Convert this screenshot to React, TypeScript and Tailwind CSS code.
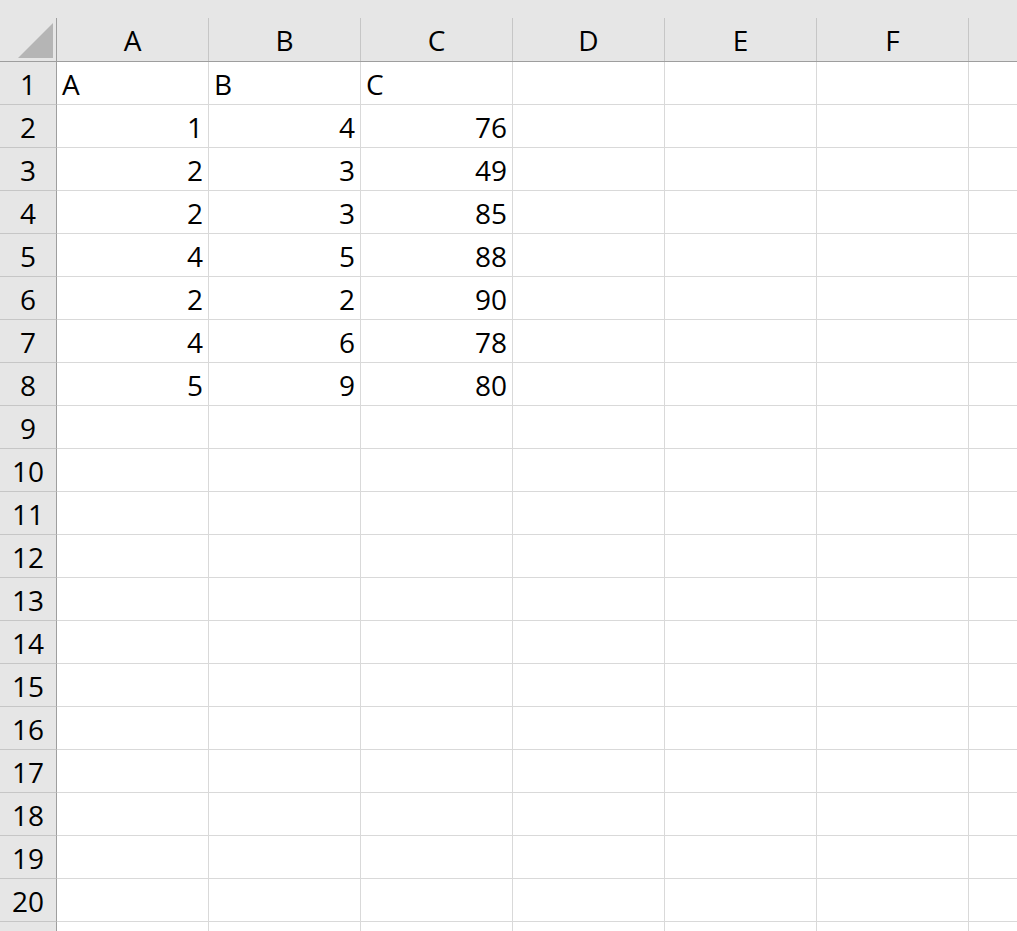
import React from "react";

const cols = ["A", "B", "C", "D", "E", "F", ""];
const data: (string | number)[][] = [
  ["A", "B", "C"],
  [1, 4, 76],
  [2, 3, 49],
  [2, 3, 85],
  [4, 5, 88],
  [2, 2, 90],
  [4, 6, 78],
  [5, 9, 80],
];

export default function App() {
  const rows = Array.from({ length: 21 }, (_, i) => i + 1);
  return (
    <div
      className="w-[1017px] h-[931px] overflow-hidden bg-white text-black"
      style={{ fontFamily: '"Open Sans", "Noto Sans", sans-serif' }}
    >
      {/* header row */}
      <div className="flex h-[62px] bg-[#e6e6e6] border-b border-[#9e9e9e]">
        <div className="w-[57px] shrink-0 flex flex-col">
          <div className="h-[18px]" />
          <div className="flex-1 relative border-r border-[#9e9e9e]">
            <svg className="absolute left-[18px] top-[5px]" width="35" height="35" viewBox="0 0 35 35">
              <polygon points="35,0 35,35 0,35" fill="#b5b5b5" />
            </svg>
          </div>
        </div>
        {cols.map((c, i) => (
          <div key={i} className="w-[152px] shrink-0 flex flex-col">
            <div className="h-[18px]" />
            <div className="flex-1 flex items-center justify-center border-r border-[#c6c6c6] text-[28px] leading-none pt-[1px]">
              {c}
            </div>
          </div>
        ))}
      </div>
      {rows.map((r) => {
        const rowData = data[r - 1];
        return (
          <div key={r} className="flex h-[43px]">
            <div className="w-[57px] shrink-0 bg-[#e6e6e6] border-r border-b border-r-[#9e9e9e] border-b-[#c6c6c6] flex items-center justify-center text-[28px] leading-none pt-[1px]">
              {r <= 20 ? r : ""}
            </div>
            {cols.map((_, ci) => {
              const v = rowData ? rowData[ci] : undefined;
              const isNum = typeof v === "number";
              return (
                <div
                  key={ci}
                  className={`w-[152px] shrink-0 border-r border-b border-[#d9d9d9] flex items-center text-[28px] leading-none pt-[1px] ${
                    isNum ? "justify-end pr-[5px]" : "justify-start pl-[5px]"
                  }`}
                >
                  {v !== undefined ? String(v) : ""}
                </div>
              );
            })}
          </div>
        );
      })}
    </div>
  );
}
